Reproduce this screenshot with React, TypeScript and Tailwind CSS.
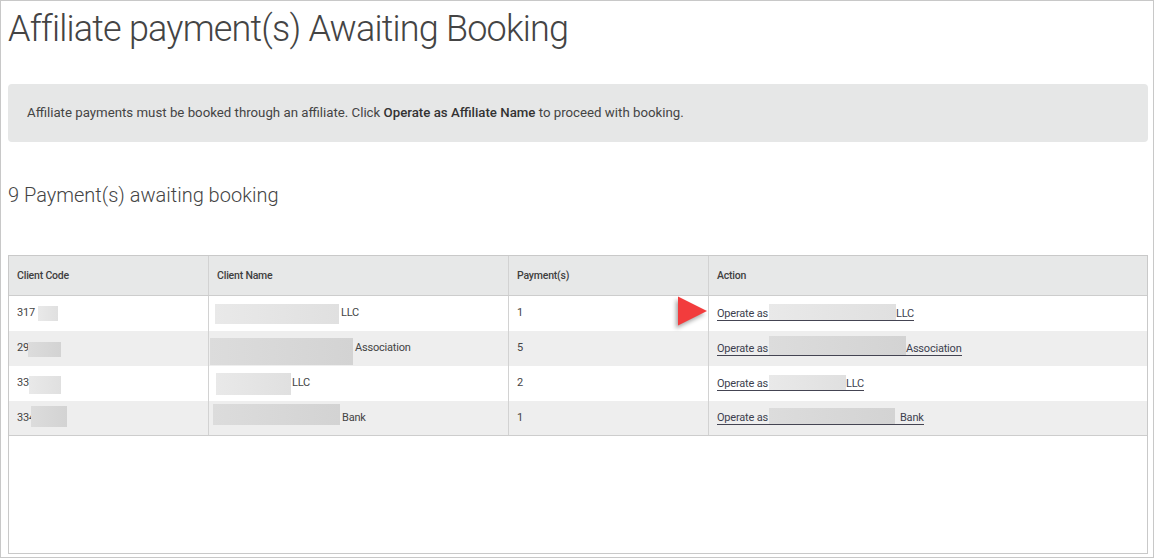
import type { ReactNode } from 'react';

type Row = {
  code: ReactNode;
  name: ReactNode;
  payments: string;
  action: ReactNode;
  shaded: boolean;
};

const blurLight = 'bg-linear-to-r from-[#e9e9e9] to-[#e0e0e0]';
const blurDark = 'bg-linear-to-r from-[#dcdcdc] to-[#d3d3d3]';

function Operate({ children }: { children: ReactNode }) {
  return (
    <a
      href="#"
      className="inline-flex items-end border-b border-[#444452] text-[#3d3f4e] leading-[13px]"
    >
      <span>Operate as</span>
      {children}
    </a>
  );
}

const rows: Row[] = [
  {
    code: (
      <>
        <span>317</span>
        <span className={`ml-[3px] inline-block h-[15px] w-[20px] ${blurLight}`} />
      </>
    ),
    name: (
      <>
        <span className={`-ml-[2px] inline-block h-[20px] w-[124px] ${blurLight}`} />
        <span className="ml-[2px]">LLC</span>
      </>
    ),
    payments: '1',
    action: (
      <Operate>
        <span className={`ml-[1px] -mt-[3px] inline-block h-[16px] w-[127px] ${blurLight}`} />
        <span>LLC</span>
      </Operate>
    ),
    shaded: false,
  },
  {
    code: (
      <>
        <span>29</span>
        <span className={`-ml-[1px] mt-[1px] inline-block h-[15px] w-[33px] ${blurDark}`} />
      </>
    ),
    name: (
      <>
        <span className={`-ml-[7px] mt-[5px] inline-block h-[27px] w-[143px] ${blurDark}`} />
        <span className="ml-[2px]">Association</span>
      </>
    ),
    payments: '5',
    action: (
      <Operate>
        <span className={`ml-[1px] -mt-[6px] inline-block h-[19px] w-[137px] ${blurDark}`} />
        <span>Association</span>
      </Operate>
    ),
    shaded: true,
  },
  {
    code: (
      <>
        <span>33</span>
        <span className={`mt-[2px] inline-block h-[18px] w-[32px] ${blurLight}`} />
      </>
    ),
    name: (
      <>
        <span className={`-ml-[1px] inline-block h-[22px] w-[75px] ${blurLight}`} />
        <span className="ml-[1px]">LLC</span>
      </>
    ),
    payments: '2',
    action: (
      <Operate>
        <span className={`ml-[1px] -mt-[2px] inline-block h-[15px] w-[77px] ${blurLight}`} />
        <span>LLC</span>
      </Operate>
    ),
    shaded: false,
  },
  {
    code: (
      <>
        <span>334</span>
        <span className={`-ml-[4px] -mt-[3px] inline-block h-[21px] w-[36px] ${blurDark}`} />
      </>
    ),
    name: (
      <>
        <span className={`-ml-[4px] -mt-[7px] inline-block h-[21px] w-[127px] ${blurDark}`} />
        <span className="ml-[2px]">Bank</span>
      </>
    ),
    payments: '1',
    action: (
      <Operate>
        <span className={`ml-[1px] -mt-[3px] inline-block h-[16px] w-[126px] ${blurDark}`} />
        <span>&nbsp;&nbsp;Bank</span>
      </Operate>
    ),
    shaded: true,
  },
];

const headers = ['Client Code', 'Client Name', 'Payment(s)', 'Action'];

export default function App() {
  return (
    <div className="h-[558px] w-[1154px] border border-[#c8c8c8] bg-white px-[7px] font-[Roboto,sans-serif] text-[#444]">
      <h1 className="mt-[10px] text-[36px] font-light leading-none tracking-[-0.8px] text-[#444]">
        Affiliate payment(s) Awaiting Booking
      </h1>

      <div className="mt-[37px] flex h-[58px] w-[1140px] items-center rounded-[4px] bg-[#e6e7e7] px-[19px] text-[13.25px] text-[#444]">
        <p>
          Affiliate payments must be booked through an affiliate. Click{' '}
          <strong className="font-medium text-[#333]">Operate as Affiliate Name</strong> to proceed
          with booking.
        </p>
      </div>

      <h2 className="mt-[43px] text-[20px] font-light leading-none text-[#444]">
        9 Payment(s) awaiting booking
      </h2>

      <div className="mt-[50px] h-[299px] w-[1140px] border border-[#c9c9c9] text-[11px] tracking-[-0.2px]">
        <div className="grid h-[40px] grid-cols-[200px_300px_200px_1fr] border-b border-[#cdcdcd] bg-[#e7e8e8]">
          {headers.map((h, i) => (
            <div
              key={h}
              className={`flex items-center px-2 pt-[1px] text-[10.5px] font-medium text-[#3f3f3f] ${
                i < 3 ? 'border-r border-[#d2d2d2]' : ''
              }`}
            >
              {h}
            </div>
          ))}
        </div>

        {rows.map((r, idx) => (
          <div
            key={idx}
            className={`grid h-[35px] grid-cols-[200px_300px_200px_1fr] ${
              r.shaded ? 'bg-[#eeeeee]' : 'bg-white'
            } ${idx === rows.length - 1 ? 'border-b border-[#cdcdcd]' : ''}`}
          >
            <div className="flex items-center border-r border-[#d2d2d2] px-2">{r.code}</div>
            <div className="flex items-center border-r border-[#d2d2d2] px-2">{r.name}</div>
            <div className="flex items-center border-r border-[#d2d2d2] px-2">{r.payments}</div>
            <div className="relative flex items-center px-2">
              {idx === 0 && (
                <svg
                  className="absolute top-0 -left-[32px] h-[30px] w-[31px] drop-shadow-[-2px_3px_2px_rgba(0,0,0,0.35)]"
                  viewBox="0 0 31 30"
                >
                  <path d="M1 0.5 L30 15 L1 29.5 Z" fill="#f23c3d" />
                </svg>
              )}
              {r.action}
            </div>
          </div>
        ))}
      </div>
    </div>
  );
}
